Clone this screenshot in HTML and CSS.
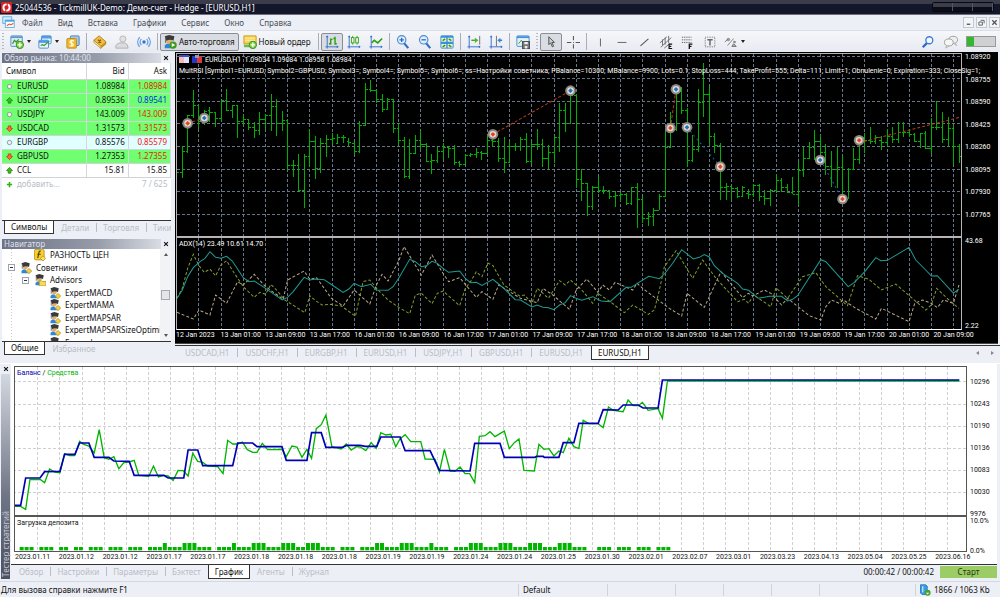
FILE: index.html
```html
<!DOCTYPE html>
<html lang="ru">
  <head>
    <meta charset="utf-8" />
    <title>25044536 - TickmillUK-Demo: Демо-счет - Hedge - [EURUSD,H1]</title>
    <meta name="viewport" content="width=device-width, initial-scale=1" />
    <link rel="stylesheet" href="styles.css">
  </head>
  <body>
    <svg class="defs" width="0" height="0">
      <defs>
        <symbol id="i-plus" viewBox="0 0 8 8"><circle cx="4" cy="4" r="4" fill="#3c9a1c"/><circle cx="4" cy="4" r="3" fill="#7dcb45"/><path d="M4 1.8v4.4M1.8 4h4.4" stroke="#fff" stroke-width="1.3"/></symbol>
        <symbol id="i-newchart" viewBox="0 0 16 16"><rect x="1" y="1" width="13" height="12" rx="1" fill="#dcebfa" stroke="#4c86bd"/><path d="M1 2.500h13" stroke="#5b97d0" stroke-width="2"/><path d="M3 10l2-4 2 2 3-3" stroke="#3a9a28" stroke-width="1.500" fill="none"/><use href="#i-plus" x="6.500" y="6.500" width="9.500" height="9.500"/></symbol>
        <symbol id="i-windows" viewBox="0 0 16 16"><rect x="4" y="1" width="11" height="9" rx="1" fill="#e6f1fc" stroke="#3d86cd"/><path d="M4 2.500h11" stroke="#4f9be6" stroke-width="3"/><rect x="1" y="6" width="11" height="9" rx="1" fill="#eef6fd" stroke="#3d86cd"/><path d="M1 7.500h11" stroke="#4f9be6" stroke-width="3"/><path d="M3 12l2-1 2 1 6-5" stroke="#3a9a28" stroke-width="1.300" fill="none"/></symbol>
        <symbol id="i-dollar" viewBox="0 0 16 16"><rect x="5" y="1" width="10" height="11" rx="1" fill="#a9c9ea" stroke="#3d78b8"/><rect x="1" y="4" width="11" height="11" rx="1" fill="#f3b92c" stroke="#b98a14"/><path d="M9 7q-2.500-1.500-4 0t1.500 2.500 1.500 2.500-4 0M6.500 5.500v8" stroke="#fff7d8" fill="none" stroke-width="1.400"/></symbol>
        <symbol id="i-book" viewBox="0 0 16 16"><path d="M1 6l6-5 8 7-6 5z" fill="#f0c044" stroke="#a87812"/><path d="M1 6l8 7v2.500l-8-7z" fill="#fbe7a2" stroke="#a87812" stroke-width=".7"/><path d="M9 13l6-5v2.500l-6 5z" fill="#c98f18"/><path d="M5.500 5.500l4 3M9 5.500l-3 3" stroke="#8a5c0a" stroke-width="1.500"/></symbol>
        <symbol id="i-cloud" viewBox="0 0 16 16"><circle cx="9" cy="4.500" r="3.500" fill="#e2e2e4" stroke="#b4b4b8"/><path d="M1 15q-1-5 5-6h5q4 1 4 6z" fill="#dcdcdf" stroke="#acacb0"/></symbol>
        <symbol id="i-signal" viewBox="0 0 16 16"><circle cx="8" cy="8" r="2" fill="#2f78d2"/><path d="M5 4.500q-3 3.500 0 7M11 4.500q3 3.500 0 7M3 2.500q-4.500 5.500 0 11M13 2.500q4.500 5.500 0 11" fill="none" stroke="#5b96dd" stroke-width="1.200"/></symbol>
        <symbol id="i-expert" viewBox="0 0 16 16"><path d="M2 15V12q2-3 5-2l4 5z" fill="#2e86d8"/><circle cx="7" cy="7" r="3.200" fill="#e0b070"/><path d="M2 1.500l5-1.500 6 1.500-1 5q-4-2-8 0z" fill="#3a3a3c"/><path d="M3 3v6" stroke="#555"/></symbol>
        <symbol id="i-auto" viewBox="0 0 16 16"><use href="#i-expert" width="16" height="16"/><circle cx="11.500" cy="11.500" r="4.200" fill="#3c9a1c"/><path d="M10 9.200v4.600l4-2.300z" fill="#fff"/></symbol>
        <symbol id="i-ea" viewBox="0 0 16 16"><use href="#i-expert" width="16" height="16"/><path d="M12 8.500l3.500 3.500-3.500 3.500-3.500-3.500z" fill="#f6d23e" stroke="#a98a16"/></symbol>
        <symbol id="i-eafolder" viewBox="0 0 16 16"><use href="#i-expert" width="16" height="16"/><path d="M7 9h3l1 1h5v6H7z" fill="#f8da58" stroke="#b5931b"/></symbol>
        <symbol id="i-fx" viewBox="0 0 16 16"><rect x=".5" y=".5" width="13" height="14" rx="2" fill="#f7cf30" stroke="#a8841a"/><path d="M9 3q-2-1-2.500 2L5 12M4.500 7h4.500" stroke="#503c00" stroke-width="1.500" fill="none"/><path d="M12 9l3.500 3.500L12 16l-3.500-3.500z" fill="#fbe25a" stroke="#a98a16"/></symbol>
        <symbol id="i-order" viewBox="0 0 16 16"><path d="M1 1h14v9H1z" fill="#f8d352" stroke="#c39a22"/><path d="M2 3.500h12M2 6h12" stroke="#fff3bd"/><path d="M1 11h7v3H1z" fill="#74b848"/><use href="#i-plus" x="6.500" y="6.500" width="9.500" height="9.500"/></symbol>
        <symbol id="i-axes" viewBox="0 0 16 16"><path d="M2.500 1v14.500M.5 13.500H15" stroke="#2b66c8" fill="none"/><path d="M1 2.500l1.500-2 1.500 2M13.500 12l2 1.500-2 1.500" fill="#2b66c8"/></symbol>
        <symbol id="i-bars" viewBox="0 0 16 16"><use href="#i-axes" width="16" height="16"/><path d="M6.500 4v7M4.500 10h2M6.500 5h2M11.500 2v9M9.500 4h2M11.500 10h2" stroke="#2f9e12" stroke-width="1.600"/></symbol>
        <symbol id="i-candles" viewBox="0 0 16 16"><use href="#i-axes" width="16" height="16"/><path d="M6.500 1v10M11.500 1v10" stroke="#2f9e12"/><rect x="5" y="3" width="3" height="6" fill="#eef8ea" stroke="#2f9e12"/><rect x="10" y="3" width="3" height="6" fill="#eef8ea" stroke="#2f9e12"/></symbol>
        <symbol id="i-line" viewBox="0 0 16 16"><use href="#i-axes" width="16" height="16"/><path d="M3 9l3-3 4 3 5-5" fill="none" stroke="#2f9e12" stroke-width="1.800"/></symbol>
        <symbol id="i-zoomin" viewBox="0 0 16 16"><path d="M9 9l5 6" stroke="#2d6fc4" stroke-width="2.500"/><circle cx="6.500" cy="5.500" r="4.800" fill="#e0effc" stroke="#4c8ad0" stroke-width="1.300"/><path d="M6.500 3v5M4 5.500h5" stroke="#2d6fc4" stroke-width="1.500"/></symbol>
        <symbol id="i-zoomout" viewBox="0 0 16 16"><path d="M9 9l5 6" stroke="#2d6fc4" stroke-width="2.500"/><circle cx="6.500" cy="5.500" r="4.800" fill="#e0effc" stroke="#4c8ad0" stroke-width="1.300"/><path d="M4 5.500h5" stroke="#2d6fc4" stroke-width="1.500"/></symbol>
        <symbol id="i-tile" viewBox="0 0 16 16"><rect x="1" y="1" width="14" height="14" rx="1" fill="#e4f5dc" stroke="#3f86c9"/><path d="M1 2h14M1 9h14" stroke="#3f8fe0" stroke-width="2.500"/><path d="M8 1v14" stroke="#3f86c9" stroke-width="1.500"/><path d="M3 6.500l3-2M10 4.500l3 2M3 13.500l3-2M10 11.500l3 2" stroke="#2f9e12" stroke-width="1.800"/></symbol>
        <symbol id="i-scroll" viewBox="0 0 16 16"><use href="#i-axes" width="16" height="16"/><path d="M14.500 1v10" stroke="#666"/><path d="M5 6h4" stroke="#2f9e12" stroke-width="1.500"/><path d="M9 3l4 3-4 3z" fill="#4bb52b"/></symbol>
        <symbol id="i-shift" viewBox="0 0 16 16"><use href="#i-axes" width="16" height="16"/><path d="M8.500 1v12" stroke="#666"/><path d="M12 6h3" stroke="#2b66c8" stroke-width="1.500"/><path d="M13 3L9.500 6 13 9z" fill="#3f86d9"/></symbol>
        <symbol id="i-template" viewBox="0 0 16 16"><rect x="1" y="1" width="14" height="12" rx="1" fill="#e4f1fb" stroke="#3f86c9"/><path d="M1 2.500h14" stroke="#3f8fe0" stroke-width="2"/><path d="M3 10l3-4 2 3" stroke="#2f9e12" fill="none"/><rect x="7.500" y="7.500" width="8" height="8" fill="#777" stroke="#444"/><path d="M9.500 8v2.500h4V8M10 15.500v-3h3v3" fill="#eee"/></symbol>
        <symbol id="i-cursor" viewBox="0 0 16 16"><path d="M5.500 2v9l2-2 2 4.500 1.500-.7-2-4.300h3z" fill="#ccc" stroke="#444"/></symbol>
        <symbol id="i-cross" viewBox="0 0 16 16"><path d="M8.500 1v5M8.500 10.500v5M1 8.500h5M11 8.500h5M8 8.500h1" stroke="#555" stroke-width="1.200"/></symbol>
        <symbol id="i-vline" viewBox="0 0 16 16"><path d="M8.500 4v9" stroke="#555"/></symbol>
        <symbol id="i-hline" viewBox="0 0 16 16"><path d="M3 8.500h10" stroke="#555"/></symbol>
        <symbol id="i-diag" viewBox="0 0 16 16"><path d="M4 12.500l9-8" stroke="#555" stroke-width="1.200"/></symbol>
        <symbol id="i-channel" viewBox="0 0 16 16"><path d="M1 9l8-7M2 14L14 3M6 15l6-5M4 5v7M7 3v8M11 1v8" stroke="#666"/><path d="M15 10.500h-3.500v5H15M11.500 13H14" stroke="#111" fill="none" stroke-width="1.300"/></symbol>
        <symbol id="i-fibo" viewBox="0 0 16 16"><path d="M1 2.500h11M1 5.500h11M1 8.500h11" stroke="#555" stroke-dasharray="1.500 1"/><path d="M13 10.500H9.500V16M9.500 13H12" stroke="#111" fill="none" stroke-width="1.500"/></symbol>
        <symbol id="i-text" viewBox="0 0 16 16"><rect x="2.500" y="2.500" width="11" height="11" fill="none" stroke="#666" stroke-dasharray="1 1"/><path d="M5 5.500h6M8 5.500V12" stroke="#666" stroke-width="1.600"/></symbol>
        <symbol id="i-objects" viewBox="0 0 16 16"><path d="M4 12l7-8" stroke="#777"/><circle cx="5" cy="5" r="2" fill="#999"/><path d="M1 8l3-3M9 13l2-3 3 3z" stroke="#666" fill="#bbb"/><circle cx="12" cy="8" r="1.500" fill="#888"/></symbol>
        <symbol id="i-search" viewBox="0 0 16 16"><path d="M7 9l-5 5" stroke="#2b66c8" stroke-width="2.500"/><circle cx="9.500" cy="6" r="4" fill="#f2f8ff" stroke="#3f7bd6" stroke-width="1.500"/></symbol>
        <symbol id="i-chat" viewBox="0 0 16 16"><ellipse cx="10.500" cy="5.500" rx="5" ry="4" fill="#eee" stroke="#999"/><ellipse cx="5.500" cy="8.500" rx="5" ry="4" fill="#f6f6f6" stroke="#999"/><path d="M3 12l-1 3 4-2.500M13 9l1.500 3-4-2.500" fill="#ddd" stroke="#999" stroke-width=".7"/></symbol>
        <symbol id="i-app" viewBox="0 0 16 16"><rect width="16" height="16" rx="2" fill="#d81f26"/><circle cx="8" cy="8" r="4.500" fill="none" stroke="#fff" stroke-width="2.800"/><path d="M9 0v7M7 16V9" stroke="#d81f26" stroke-width="1.500"/></symbol>
        <symbol id="i-mdi" viewBox="0 0 16 16"><rect x="1" y="1" width="11" height="8" fill="#d9ecfc" stroke="#4aa3df"/><rect x="4" y="5" width="11" height="9" fill="#fff" stroke="#4aa3df"/><path d="M4 6h11" stroke="#4aa3df" stroke-width="2"/><path d="M6 12l3-2 2 1 3-2" stroke="#e5512d" stroke-width="1.300" fill="none"/></symbol>
        <symbol id="i-up" viewBox="0 0 8 8"><path d="M4 .5L7.500 4 5.500 4.500V7h-3V4.500L.5 4z" fill="#35c018" stroke="#187c06" stroke-width=".8"/></symbol>
        <symbol id="i-down" viewBox="0 0 8 8"><path d="M4 7.500L7.500 4 5.500 3.500V1h-3V3.500L.5 4z" fill="#ff6a3c" stroke="#c22a0c" stroke-width=".8"/></symbol>
        <symbol id="i-flat" viewBox="0 0 8 8"><circle cx="4" cy="4" r="2.500" fill="#f2f2f2" stroke="#8b8b8b"/></symbol>
        <symbol id="i-traffic" viewBox="0 0 16 16"><path d="M2 1h7l2 2v11H4L2 12z" fill="#35a0e8" stroke="#1f6ead"/><path d="M5 3v8" stroke="#d8efff" stroke-width="1.500"/><circle cx="11.500" cy="11.500" r="4" fill="#4aa02c"/><path d="M11.500 14l-2.200-2.500h4.400z" fill="#fff"/></symbol>
        <symbol id="i-x" viewBox="0 0 8 8"><path d="M1.500 1.500l5 5M6.500 1.500l-5 5" stroke="#111" stroke-width="1.500"/></symbol>
      </defs>
    </svg>

    <header class="titlebar">
      <svg class="app-icon"><use href="#i-app"/></svg>
      <h1>25044536 - TickmillUK-Demo: Демо-счет - Hedge - [EURUSD,H1]</h1>
      <div class="window-buttons"><button aria-label="Свернуть"></button><button aria-label="Развернуть"></button><button aria-label="Закрыть"></button></div>
    </header>

    <nav class="menubar">
      <svg class="mdi-icon"><use href="#i-mdi"/></svg>
      <a href="#">Файл</a><a href="#">Вид</a><a href="#">Вставка</a><a href="#">Графики</a><a href="#">Сервис</a><a href="#">Окно</a><a href="#">Справка</a>
      <div class="mdi-buttons">
        <button aria-label="Свернуть окно"><svg viewBox="0 0 8 8"><path d="M2 6h4" stroke="#555" stroke-width="1.500"/></svg></button>
        <button aria-label="Восстановить окно"><svg viewBox="0 0 8 8"><path d="M3 1.500h4v3.500M1 3.500h4v3.500H1z" stroke="#555" fill="none"/></svg></button>
        <button aria-label="Закрыть окно"><svg viewBox="0 0 8 8"><path d="M1.500 1.500l5 5M6.500 1.500l-5 5" stroke="#555" stroke-width="1.500"/></svg></button>
      </div>
    </nav>

    <div class="toolbar">
      <span class="grip"></span>
      <button class="tool drop" aria-label="Новый график"><svg><use href="#i-newchart"/></svg></button>
      <button class="tool drop" aria-label="Профили"><svg><use href="#i-windows"/></svg></button>
      <button class="tool" aria-label="Обзор рынка"><svg><use href="#i-dollar"/></svg></button>
      <span class="sep"></span>
      <button class="tool" aria-label="Маркет"><svg><use href="#i-book"/></svg></button>
      <button class="tool" aria-label="Облако"><svg><use href="#i-cloud"/></svg></button>
      <button class="tool" aria-label="Сигналы"><svg><use href="#i-signal"/></svg></button>
      <span class="sep"></span>
      <button class="tool wide pressed"><svg><use href="#i-auto"/></svg>Авто-торговля</button>
      <button class="tool wide"><svg><use href="#i-order"/></svg>Новый ордер</button>
      <span class="sep"></span>
      <button class="tool pressed" aria-label="Бары"><svg><use href="#i-bars"/></svg></button>
      <button class="tool" aria-label="Свечи"><svg><use href="#i-candles"/></svg></button>
      <button class="tool" aria-label="Линия"><svg><use href="#i-line"/></svg></button>
      <span class="sep"></span>
      <button class="tool" aria-label="Увеличить"><svg><use href="#i-zoomin"/></svg></button>
      <button class="tool" aria-label="Уменьшить"><svg><use href="#i-zoomout"/></svg></button>
      <button class="tool" aria-label="Мозаика"><svg><use href="#i-tile"/></svg></button>
      <span class="sep"></span>
      <button class="tool" aria-label="Автопрокрутка"><svg><use href="#i-scroll"/></svg></button>
      <button class="tool" aria-label="Сдвиг"><svg><use href="#i-shift"/></svg></button>
      <span class="sep"></span>
      <button class="tool" aria-label="Шаблоны"><svg><use href="#i-template"/></svg></button>
      <span class="grip edge"></span>
      <button class="tool pressed" aria-label="Курсор"><svg><use href="#i-cursor"/></svg></button>
      <button class="tool" aria-label="Перекрестие"><svg><use href="#i-cross"/></svg></button>
      <span class="sep"></span>
      <button class="tool" aria-label="Вертикальная линия"><svg><use href="#i-vline"/></svg></button>
      <button class="tool" aria-label="Горизонтальная линия"><svg><use href="#i-hline"/></svg></button>
      <button class="tool" aria-label="Трендовая линия"><svg><use href="#i-diag"/></svg></button>
      <button class="tool" aria-label="Канал"><svg><use href="#i-channel"/></svg></button>
      <button class="tool" aria-label="Фибоначчи"><svg><use href="#i-fibo"/></svg></button>
      <button class="tool" aria-label="Текст"><svg><use href="#i-text"/></svg></button>
      <button class="tool drop" aria-label="Объекты"><svg><use href="#i-objects"/></svg></button>
      <div class="toolbar-right">
        <button class="tool" aria-label="Поиск"><svg><use href="#i-search"/></svg></button>
        <button class="tool" aria-label="Чат"><svg class="chat"><use href="#i-chat"/></svg></button>
        <span class="level"></span>
      </div>
    </div>

    <main class="workspace">
      <aside class="sidebar">
        <section class="panel watch">
          <h2 class="caption"><span>Обзор рынка: 10:44:00</span><button aria-label="Закрыть"><svg><use href="#i-x"/></svg></button></h2>
          <div class="watch-body">
            <table>
              <thead>
                <tr><th>Символ</th><th>Bid</th><th>Ask</th></tr>
              </thead>
              <tbody>
                <tr class="hit"><td><svg><use href="#i-flat"/></svg>EURUSD</td><td>1.08984</td><td class="red">1.08984</td></tr>
                <tr class="hit"><td><svg><use href="#i-up"/></svg>USDCHF</td><td>0.89536</td><td class="blue">0.89541</td></tr>
                <tr class="hit"><td><svg><use href="#i-flat"/></svg>USDJPY</td><td>143.009</td><td class="red">143.009</td></tr>
                <tr class="hit"><td><svg><use href="#i-down"/></svg>USDCAD</td><td>1.31573</td><td class="red">1.31573</td></tr>
                <tr class="current"><td><svg><use href="#i-flat"/></svg>EURGBP</td><td>0.85576</td><td class="red">0.85579</td></tr>
                <tr class="hit"><td><svg><use href="#i-down"/></svg>GBPUSD</td><td>1.27353</td><td class="red">1.27355</td></tr>
                <tr><td><svg><use href="#i-up"/></svg>CCL</td><td>15.81</td><td>15.85</td></tr>
              </tbody>
              <tfoot>
                <tr><td><svg viewBox="0 0 8 8"><path d="M4 1v6M1 4h6" stroke="#2fb015" stroke-width="1.800"/></svg>добавить...</td><td></td><td>7 / 625</td></tr>
              </tfoot>
            </table>
          </div>
          <div class="tabs">
            <button class="active">Символы</button><button>Детали</button><button>Торговля</button><button>Тики</button>
          </div>
        </section>

        <section class="panel navigator">
          <h2 class="caption"><span>Навигатор</span><button aria-label="Закрыть"><svg><use href="#i-x"/></svg></button></h2>
          <div class="tree-body">
            <ul class="tree">
              <li class="l2"><svg><use href="#i-fx"/></svg>РАЗНОСТЬ ЦЕН</li>
              <li class="l1"><i class="toggle"></i><svg><use href="#i-ea"/></svg>Советники</li>
              <li class="l2"><i class="toggle"></i><svg><use href="#i-eafolder"/></svg>Advisors</li>
              <li class="l3"><svg><use href="#i-ea"/></svg>ExpertMACD</li>
              <li class="l3"><svg><use href="#i-ea"/></svg>ExpertMAMA</li>
              <li class="l3"><svg><use href="#i-ea"/></svg>ExpertMAPSAR</li>
              <li class="l3"><svg><use href="#i-ea"/></svg>ExpertMAPSARSizeOptimi</li>
              <li class="l3"><svg><use href="#i-ea"/></svg>Examples</li>
            </ul>
            <div class="scrollbar"><span class="arrow up"></span><span class="thumb"></span><span class="arrow down"></span></div>
          </div>
          <div class="tabs">
            <button class="active">Общие</button><button>Избранное</button>
          </div>
        </section>
      </aside>

      <section class="charts">
        <div class="chart-window">
          <div class="plot-row">
            <div class="plot price-plot">
              <svg id="price" viewBox="21 12 2355 546" preserveAspectRatio="none"></svg>
              <div class="legend">
                <p><svg viewBox="0 0 10 8"><path d="M0 0h10v8H0z" fill="#dfe3ff"/><path d="M0 0h5v8H0z" fill="#f7b9b4"/><path d="M0 0h10v2H0z" fill="#3b50c8"/></svg><svg viewBox="0 0 10 8"><path d="M0 1h5v7H0z" fill="#2438c8"/><path d="M5 1h5v7H5z" fill="#d83a3a"/><path d="M3 0h4v3H3z" fill="#9a9ab0"/></svg>EURUSD,H1&nbsp; 1.09034 1.09084 1.08958 1.08984</p>
                <p>MultRSI [Symbol1=EURUSD; Symbol2=GBPUSD; Symbol3=; Symbol4=; Symbol5=; Symbol6=; ss=Настройки советника; PBalance=10300; MBalance=9900; Lots=0.1; StopLoss=444; TakeProfit=555; Delta=111; Limit=1; Obnulenie=0; Expiration=333; CloseSig=1;</p>
              </div>
            </div>
            <div class="axis price-axis"><span>1.08920</span><span>1.08755</span><span>1.08590</span><span>1.08425</span><span>1.08260</span><span>1.08095</span><span>1.07930</span><span>1.07765</span></div>
          </div>
          <div class="plot-row">
            <div class="plot adx-plot">
              <svg id="adx" viewBox="21 9 2355 273" preserveAspectRatio="none"></svg>
              <div class="legend"><p>ADX(14) 23.49 10.61 14.70</p></div>
            </div>
            <div class="axis"><span>43.68</span><span>2.22</span></div>
          </div>
          <div class="time-axis" id="price-times"></div>
        </div>
        <div class="tabs chart-tabs">
          <button>USDCAD,H1</button><button>USDCHF,H1</button><button>EURGBP,H1</button><button>EURUSD,H1</button><button>USDJPY,H1</button><button>GBPUSD,H1</button><button>EURUSD,H1</button><button class="active">EURUSD,H1</button>
          <span class="tab-scroll"><i class="arrow left"></i><i class="arrow right"></i></span>
        </div>
      </section>
    </main>

    <section class="tester">
      <div class="tester-side">
        <button aria-label="Закрыть"><svg><use href="#i-x"/></svg></button>
        <h2>Тестер стратегий</h2>
      </div>
      <div class="tester-main">
        <div class="report">
          <div class="plot-row">
            <div class="plot balance-plot">
              <svg id="balance" viewBox="43 18 2857 444" preserveAspectRatio="none"></svg>
              <div class="legend"><p><span class="c-balance">Баланс</span> / <span class="c-equity">Средства</span></p></div>
            </div>
            <div class="axis balance-axis"><span>10296</span><span>10243</span><span>10190</span><span>10136</span><span>10083</span><span>10030</span><span>9976</span></div>
          </div>
          <div class="plot-row">
            <div class="plot load-plot">
              <svg id="load" viewBox="43 471 2857 102" preserveAspectRatio="none"></svg>
              <div class="legend"><p>Загрузка депозита</p></div>
            </div>
            <div class="axis load-axis"><span>10.0%</span><span>0.0%</span></div>
          </div>
          <div class="time-axis" id="test-times"></div>
        </div>
        <div class="tabs tester-tabs">
          <button>Обзор</button><button>Настройки</button><button>Параметры</button><button>Бэктест</button><button class="active">График</button><button>Агенты</button><button>Журнал</button>
          <span class="elapsed">00:00:42 / 00:00:42</span>
          <button class="start">Старт</button>
        </div>
      </div>
    </section>

    <footer class="statusbar">
      <span class="hint">Для вызова справки нажмите F1</span>
      <span class="profile">Default</span>
      <span class="cell bar-time"></span><span class="cell"></span><span class="cell"></span><span class="cell"></span><span class="cell"></span><span class="cell"></span>
      <span class="traffic"><svg><use href="#i-traffic"/></svg>1866 / 1063 Kb</span>
    </footer>
    <script src="script.js"></script>
  </body>
</html>
```
FILE: styles.css
```css
* {
  box-sizing: border-box;
}

body {
  margin: 0;
  min-height: 100vh;
  display: flex;
  flex-direction: column;
  background: #eceff5;
  color: #111;
  font: 8px/12px "Noto Sans", "Open Sans", sans-serif;
}

h1, h2, p, ul {
  margin: 0;
  padding: 0;
  font-weight: normal;
}

button {
  margin: 0;
  padding: 0;
  border: 0;
  background: none;
  color: inherit;
  font: inherit;
}

a {
  color: inherit;
  text-decoration: none;
}

.defs {
  position: absolute;
}

/* title and menu */
.titlebar {
  display: flex;
  align-items: center;
  height: 15px;
  padding: 0 0 0 1px;
  gap: 3px;
  background: linear-gradient(#3c3d4b 0 4px, #14162a 4px 14px, #70707c 14px);
  color: #fff;
}

.titlebar h1 {
  font-size: 8px;
  line-height: 14px;
  white-space: nowrap;
}

.app-icon {
  width: 11px;
  height: 11px;
}

.window-buttons {
  display: flex;
  align-self: flex-start;
  margin: 2px 6px 0 auto;
  border: 1px solid #070812;
  border-radius: 2px;
}

.window-buttons button {
  width: 20px;
  height: 8px;
  border-right: 1px solid #555664;
  background: linear-gradient(#3c3d4b 50%, #0c0d18 50%);
}

.menubar {
  display: flex;
  align-items: center;
  height: 15px;
  padding-left: 2px;
  color: #4a4d55;
}

.menubar a {
  margin-right: 15px;
}

.mdi-icon {
  width: 13px;
  height: 13px;
  margin-right: 7px;
}

.mdi-buttons {
  display: flex;
  gap: 2px;
  margin-left: auto;
}

.mdi-buttons button {
  width: 11px;
  height: 11px;
  border: 1px solid #c4c8d0;
  background: #f4f5f8;
}

.mdi-buttons svg {
  display: block;
  width: 7px;
  height: 7px;
  margin: 1px;
}

/* toolbar */
.toolbar {
  display: flex;
  align-items: center;
  height: 22px;
  padding: 0 0 0 2px;
  border-top: 1px solid #dcdfe6;
  background: linear-gradient(#f5f7fa, #e7eaf1);
}

.tool {
  display: flex;
  align-items: center;
  justify-content: center;
  flex: none;
  width: 22px;
  height: 18px;
  border: 1px solid transparent;
}

.tool svg {
  width: 14px;
  height: 14px;
}

.tool svg.chat {
  width: 16px;
}

.tool.drop {
  width: 28px;
  gap: 3px;
}

.tool.drop::after {
  content: "";
  border: 2px solid transparent;
  border-top: 3px solid #222;
  border-bottom: 0;
}

.tool.wide {
  width: auto;
  padding: 0 3px 0 2px;
  gap: 2px;
  margin-right: 1px;
}

.tool.pressed {
  border: 1px solid #8a8d95;
  border-radius: 2px;
  background: #d9dce2;
}

.sep {
  width: 1px;
  height: 17px;
  margin: 0 2px;
  background: #a9adb5;
}

.grip {
  width: 2px;
  height: 18px;
  margin-right: 2px;
  background: repeating-linear-gradient(#b4b8c0 0 1px, transparent 1px 3px);
}

.grip.edge {
  margin: 0 2px;
}

.toolbar-right {
  display: flex;
  align-items: center;
  gap: 1px;
  margin: 0 4px 0 auto;
}

.level {
  width: 30px;
  height: 11px;
  margin-left: 3px;
  border: 1px solid #999;
  background: linear-gradient(90deg, #32b82e 7px, #cfd0d2 7px);
}

/* shared panels and tabs */
.workspace {
  display: grid;
  grid-template-columns: 175px minmax(0, 1fr);
}

.sidebar {
  display: flex;
  flex-direction: column;
  padding: 1px 4px 0 2px;
}

.panel {
  display: flex;
  flex-direction: column;
}

.caption {
  display: flex;
  justify-content: space-between;
  height: 10px;
  font-size: 8px;
  line-height: 10px;
  color: #dfe3ec;
}

.caption span {
  flex: 1;
  padding-left: 2px;
  background: linear-gradient(90deg, #6d7286, #979caa 60%, #d9dce3);
}

.caption button,
.tester-side button {
  width: 10px;
  height: 10px;
  line-height: 0;
}

.caption svg,
.tester-side svg {
  width: 6px;
  height: 6px;
}

.tabs {
  display: flex;
  height: 14px;
  padding-left: 2px;
  overflow: hidden;
  border-top: 1px solid #333;
  white-space: nowrap;
  color: #b9bdc6;
}

.tabs button {
  position: relative;
  flex: none;
  padding: 0 7px;
}

.tabs button:not(.active):not(.start) + button:not(.active):not(.start)::before {
  content: "";
  position: absolute;
  left: 0;
  top: 2px;
  height: 9px;
  border-left: 1px solid #b9bdc6;
}

.tabs .active {
  margin-top: -1px;
  padding: 0 6px;
  border: 1px solid #333;
  border-top-color: #fff;
  background: #fff;
  color: #111;
}

/* market watch */
.watch-body {
  height: 157px;
  background: #fff;
}

.watch table {
  width: 100%;
  table-layout: fixed;
  border-collapse: collapse;
}

.watch th,
.watch td {
  height: 14px;
  padding: 0 3px;
  border-right: 1px solid #d4d7dd;
  border-bottom: 1px solid #d0d3d8;
  line-height: 12px;
  text-align: right;
}

.watch th {
  height: 16px;
  font-weight: normal;
}

.watch th:first-child {
  width: 84px;
}

.watch th:first-child,
.watch td:first-child {
  padding-left: 4px;
  text-align: left;
}

.watch td svg {
  width: 7px;
  height: 7px;
  margin-right: 4px;
  vertical-align: -1px;
}

.watch .hit {
  background: #70ff70;
}

.watch .current {
  background: #e0ffff;
}

.watch tfoot td {
  border: 0;
  color: #b9bdc6;
}

.red {
  color: #e02800;
}

.current .red {
  color: #ff1020;
}

.blue {
  color: #0030e0;
}

/* navigator */
.navigator {
  margin-top: 5px;
}

.tree-body {
  display: flex;
  height: 92px;
  overflow: hidden;
  background: #fff;
}

.tree {
  display: grid;
  grid-template-rows: repeat(8, 1fr);
  flex: 1;
  height: 100px;
  overflow: hidden;
  list-style: none;
  background: repeating-linear-gradient(#ccc 0 1px, transparent 1px 3px) 9px 0 / 1px 100% no-repeat;
}

.tree li {
  display: flex;
  align-items: center;
  white-space: nowrap;
}

.tree svg {
  flex: none;
  width: 12px;
  height: 12px;
  margin-right: 4px;
}

.tree .l1 { padding-left: 6px; }
.tree .l2 { padding-left: 32px; }
.tree .l3 { padding-left: 47px; }

.toggle {
  width: 7px;
  height: 7px;
  margin-right: 5px;
  border: 1px solid #9aa2b4;
  background: linear-gradient(#333, #333) center / 3px 1px no-repeat #fff;
}

.l2 .toggle {
  margin-left: -12px;
}

.scrollbar {
  display: flex;
  flex-direction: column;
  align-items: center;
  width: 11px;
  padding: 4px 0;
  background: #f2f3f5;
}

.thumb {
  width: 9px;
  height: 10px;
  margin: 34px 0 auto;
  border: 1px solid #a4a8b0;
  background: #e4e5e8;
}

.arrow {
  border: 2px solid transparent;
}

.arrow.up { border-bottom: 3px solid #555; border-top: 0; }
.arrow.down { border-top: 3px solid #555; border-bottom: 0; }
.arrow.left { border-right: 3px solid #888; border-left: 0; }
.arrow.right { border-left: 3px solid #888; border-right: 0; }

/* charts */
.chart-window {
  margin-right: 2px;
  padding: 1px 0 0 1px;
  border-bottom: 1px solid #444;
  background: #000;
  color: #fff;
}

.plot-row {
  display: grid;
  grid-template-columns: minmax(0, 1fr) 36px;
}

.plot {
  position: relative;
  border: 1px solid #b8b4b4;
}

.plot > svg {
  display: block;
  width: 100%;
}

.price-plot > svg { height: 182px; }

.adx-plot {
  border-bottom-color: #fff;
}

.adx-plot > svg { height: 91px; }

.legend {
  position: absolute;
  top: 1px;
  left: 2px;
  font-size: 7px;
  line-height: 11px;
  white-space: nowrap;
}

.legend,
.axis,
.time-axis {
  font-family: Roboto, sans-serif;
}

.legend svg {
  width: 10px;
  height: 8px;
  margin-right: 3px;
  vertical-align: -1px;
}

.axis {
  display: flex;
  flex-direction: column;
  justify-content: space-between;
  font-size: 7px;
  line-height: 8px;
}

.axis span {
  padding-left: 3px;
}

.price-axis {
  padding-bottom: 18px;
}

.time-axis {
  display: grid;
  grid-auto-flow: column;
  grid-auto-columns: minmax(0, 1fr);
  height: 13px;
  padding-right: 20px;
  font-size: 7px;
  line-height: 11px;
  white-space: nowrap;
}

.chart-tabs {
  height: 15px;
  margin-top: 1px;
}

.chart-tabs button {
  padding: 0 8px;
}

.tab-scroll {
  display: flex;
  align-items: center;
  gap: 12px;
  margin: 0 6px 0 auto;
}

/* strategy tester */
.tester {
  display: grid;
  grid-template-columns: 11px minmax(0, 1fr);
  margin-top: 3px;
  border-top: 1px solid #fff;
}

.tester-side {
  display: flex;
  flex-direction: column;
  padding-left: 1px;
}

.tester-side h2 {
  flex: 1;
  width: 9px;
  padding-top: 2px;
  background: linear-gradient(#4d5262, #6f7485 40%, #d3d7e0);
  color: #c3c7d2;
  font-size: 8px;
  line-height: 9px;
  white-space: nowrap;
  writing-mode: vertical-rl;
  transform: rotate(180deg);
}

.tester-main {
  margin-right: 3px;
}

.report {
  padding: 2px 0 0 3px;
  background: #fff;
}

.report .plot-row {
  grid-template-columns: minmax(0, 1fr) 30px;
}

.report .plot {
  border-color: #555;
}

.balance-plot > svg { height: 148px; }
.load-plot > svg { height: 34px; }

.balance-axis {
  padding-top: 12px;
  margin-bottom: -2px;
}

.load-axis {
  padding-top: 1px;
  margin-bottom: -3px;
}

.report .time-axis {
  height: 12px;
  padding: 0 18px 0 1px;
}

.c-balance { color: #0000b4; }
.c-equity { color: #00b400; }

.tester-tabs {
  height: 15px;
  padding-left: 1px;
}

.elapsed {
  margin: 0 6px 0 auto;
  color: #111;
  line-height: 14px;
}

.tabs .start {
  width: 57px;
  height: 12px;
  margin-top: 1px;
  background: #9ccc65;
  color: #1c3a08;
}

/* status bar */
.statusbar {
  display: flex;
  align-items: center;
  flex: 1;
  min-height: 17px;
  margin-top: 2px;
  border-top: 1px solid #d4d8df;
}

.statusbar > span {
  border-right: 1px solid #cfd3da;
}

.statusbar .hint {
  flex: 1;
  padding-left: 1px;
}

.profile {
  width: 89px;
  padding-left: 4px;
}

.cell {
  width: 48px;
  height: 12px;
}

.bar-time {
  width: 68px;
}

.statusbar .traffic {
  display: flex;
  align-items: center;
  gap: 3px;
  width: 84px;
  padding-left: 3px;
  border: 0;
}

.traffic svg {
  width: 12px;
  height: 12px;
}

/* drawing */
.grid-dark { stroke: #66758a; stroke-width: 1px; stroke-dasharray: 3px 2px; }
.grid-light { stroke: #d0d0d0; stroke-width: 1px; stroke-dasharray: 3px 2px; }
.bar { stroke: #00b000; stroke-width: 1px; fill: none; }
.adx, .plus-di, .minus-di { fill: none; stroke-width: 1px; }
.adx { stroke: #1f9c95; }
.plus-di { stroke: #7d9e2c; stroke-dasharray: 3px 2px; }
.minus-di { stroke: #b8a88a; stroke-dasharray: 3px 2px; }
.deal-red { stroke: #b83a1c; stroke-width: 1px; stroke-dasharray: 3px 2px; }
.deal-blue { stroke: #145c98; stroke-width: 1px; stroke-dasharray: 2px 3px; }
.balance, .equity { fill: none; }
.balance { stroke: #0000b4; stroke-width: 5; }
.equity { stroke: #00b400; stroke-width: 4; }
.load { fill: #00b400; }
.grid-dark, .grid-light, .bar, .adx, .plus-di, .minus-di, .deal-red, .deal-blue { vector-effect: non-scaling-stroke; }
.grid-dark, .grid-light, .bar { shape-rendering: crispEdges; }
```
FILE: script.js
```js
// high, low, open, close of each bar
const bars = [
  [367,367,367,367],[289,383,367,303],[195,308,303,196],[120,205,196,166],[165,236,166,214],[180,225,214,185],[172,215,180,187],[187,232,187,205],
  [150,212,205,151],[117,183,151,181],[165,205,181,167],[166,265,167,213],[195,225,213,208],[207,240,208,232],[217,265,232,241],[187,256,241,207],
  [193,236,207,195],[131,242,195,169],[148,259,169,220],[183,242,220,211],[210,360,211,346],[330,382,346,346],[313,424,346,422],[313,475,422,320],
  [237,350,320,275],[259,388,275,355],[265,370,355,280],[254,320,280,267],[250,283,267,266],[251,278,280,262],[255,278,262,262],[265,292,274,277],
  [275,315,280,303],[214,308,303,227],[100,229,227,118],[91,127,118,121],[120,160,121,149],[131,187,149,178],[145,180,178,148],[147,248,148,235],
  [222,286,235,270],[262,383,270,380],[267,388,380,309],[256,311,309,270],[243,300,270,283],[280,337,283,333],[313,372,333,331],[290,340,331,303],
  [278,327,303,293],[288,325,293,295],[285,345,295,337],[334,350,337,343],[313,343,343,316],[308,320,316,313],[295,325,313,308],[302,330,308,310],
  [260,313,310,272],[262,290,272,275],[263,337,275,325],[262,369,325,337],[275,340,337,290],[280,303,290,290],[262,303,290,268],[250,340,268,335],
  [277,342,335,283],[238,300,283,283],[267,350,283,325],[285,358,325,308],[258,339,308,263],[160,305,263,180],[160,246,180,220],[130,220,220,137],
  [133,415,137,388],[358,452,388,400],[400,498,400,470],[408,480,470,413],[380,430,413,420],[408,432,420,421],[420,448,421,438],[422,472,438,437],
  [425,453,437,433],[430,466,433,460],[410,464,460,412],[398,534,412,448],[440,520,448,505],[485,528,505,500],[475,528,500,480],[433,480,480,438],
  [247,440,438,291],[187,290,291,238],[120,242,238,125],[110,192,125,180],[175,352,180,330],[255,335,330,298],[117,305,298,157],[38,200,157,133],
  [112,285,133,258],[250,308,258,287],[280,450,287,412],[398,450,412,410],[408,450,410,416],[410,445,416,438],[407,440,438,412],[418,448,430,433],
  [403,440,433,405],[402,452,405,440],[420,465,440,445],[418,467,445,422],[373,428,422,390],[385,427,390,412],[403,430,412,427],[382,433,427,433],
  [335,465,433,361],[291,380,361,325],[275,328,325,291],[240,330,291,275],[256,312,275,308],[283,376,308,350],[303,412,350,357],[292,414,357,352],
  [315,450,352,440],[355,447,447,357],[293,360,357,327],[255,343,327,262],[250,310,262,272],[232,282,272,275],[255,283,275,262],[257,300,270,278],
  [238,288,278,258],[230,278,258,268],[215,278,268,247],[215,262,247,247],[240,262,247,253],[250,275,253,275],[248,293,275,250],[243,297,250,295],
  [205,313,295,232],[154,240,232,232],[185,278,232,267],[202,290,267,235],[225,345,235,290],[282,338,290,318],
];

const deals = [
  [53,220,"red"],[103,204,"blue"],[970,253,"red"],[1203,122,"blue"],[1503,234,"red"],[1520,118,"blue"],
  [1553,232,"blue"],[1653,350,"red"],[1953,330,"blue"],[2020,447,"red"],[2070,271,"red"],
];

const dealLines = [
  [53,220,103,204,"red"],[970,253,1203,122,"red"],[1503,234,1520,118,"red"],
  [1553,232,1653,350,"blue"],[1953,330,2020,447,"blue"],[2070,278,2376,201,"red"],
];

const adx = "21,190 37,165 53,125 70,98 90,80 105,70 120,50 137,67 153,70 170,64 187,78 203,102 220,128 237,140 253,138 287,160 337,195 353,187 370,170 403,127 420,135 437,132 463,134 487,150 520,172 537,162 553,145 575,155 603,148 620,165 655,166 670,155 687,130 720,73 737,80 755,95 770,92 787,79 803,85 820,100 837,112 870,108 887,130 903,143 920,142 937,151 970,133 987,147 1003,160 1037,194 1053,195 1087,216 1103,210 1120,217 1137,218 1153,224 1170,210 1187,203 1203,182 1220,190 1237,196 1270,185 1295,198 1322,200 1370,157 1385,157 1438,124 1470,131 1485,117 1510,85 1537,44 1572,72 1590,67 1605,59 1620,66 1635,92 1660,115 1705,145 1720,162 1738,166 1767,190 1800,184 1837,184 1855,198 1870,193 1885,182 1955,74 1970,80 2037,155 2055,143 2087,110 2120,68 2135,77 2155,76 2220,37 2240,75 2270,105 2287,123 2305,122 2353,174 2370,163";
const plusDi = "21,190 37,160 53,100 70,58 87,92 103,112 120,102 137,123 153,90 170,77 187,105 220,155 253,187 270,172 287,178 303,148 320,165 345,195 405,233 420,182 437,197 457,210 485,208 515,213 557,244 580,140 600,135 625,165 655,195 687,217 720,236 737,180 755,175 787,206 803,175 820,168 870,212 887,160 903,140 920,110 937,125 955,84 970,92 1003,150 1050,183 1065,180 1087,205 1103,160 1137,190 1170,137 1187,150 1203,135 1237,165 1270,205 1285,175 1322,200 1365,233 1390,210 1437,238 1455,225 1470,165 1485,95 1520,47 1570,130 1600,75 1640,130 1705,200 1725,193 1738,205 1753,180 1805,215 1820,158 1855,190 1900,125 1940,113 1970,155 2035,212 2065,122 2100,133 2137,165 2180,147 2270,225 2287,210 2303,160 2345,200 2370,220";
const minusDi = "21,232 70,252 87,225 120,240 137,180 170,205 203,140 220,150 253,118 287,155 340,193 353,135 403,108 420,133 440,128 485,190 520,213 553,165 600,207 620,150 637,118 655,138 687,78 703,35 755,120 787,60 820,115 837,140 870,128 920,187 937,170 970,193 987,150 1020,170 1053,190 1103,203 1120,160 1150,180 1200,223 1220,165 1252,132 1285,172 1300,150 1320,165 1337,142 1390,165 1403,145 1420,160 1500,220 1537,243 1553,175 1605,217 1655,110 1720,188 1737,175 1750,183 1785,165 1805,175 1837,210 1855,190 1920,242 1955,255 1970,215 1987,195 2010,205 2023,195 2060,220 2120,252 2137,220 2220,260 2237,205 2260,195 2287,205 2305,218 2323,195 2353,205 2370,150";

const balance = "43,433 60,433 75,351 118,351 132,332 178,331 192,280 223,280 237,246 265,246 281,289 325,289 340,300 386,301 401,343 490,343 503,351 550,351 563,267 592,267 607,314 697,314 712,246 757,246 770,257 845,257 858,298 920,298 934,215 963,215 977,259 1027,259 1040,253 1080,253 1095,256 1130,256 1142,228 1200,228 1215,269 1290,269 1318,328 1410,330 1424,247 1500,247 1513,289 1605,289 1610,286 1630,286 1633,289 1677,289 1690,245 1722,245 1737,187 1795,187 1810,146 1855,147 1870,132 1915,132 1930,141 1975,141 1988,57 2880,57";
const equity = "43,436 60,436 75,445 88,355 120,356 132,365 147,324 162,333 178,335 192,278 207,284 222,284 237,241 250,250 265,255 281,276 296,206 311,290 325,295 340,287 355,323 370,305 386,303 401,298 415,343 445,346 459,315 474,348 490,343 503,345 518,358 533,328 548,329 563,345 577,277 592,301 607,304 622,315 652,317 668,338 682,238 697,249 712,249 726,243 741,266 757,274 770,274 786,247 802,266 845,265 858,287 875,255 890,258 905,289 920,265 934,292 948,203 963,191 977,162 995,257 1023,264 1038,249 1053,267 1068,257 1080,258 1097,269 1113,245 1128,262 1142,215 1157,222 1172,220 1187,257 1200,233 1215,221 1232,242 1262,242 1275,294 1305,295 1318,333 1333,265 1350,330 1365,331 1380,318 1395,338 1409,338 1424,365 1438,226 1455,224 1470,212 1485,227 1500,218 1513,210 1528,263 1543,245 1557,234 1572,328 1603,330 1617,250 1632,265 1647,263 1662,285 1677,270 1690,275 1707,232 1722,257 1737,263 1750,178 1767,188 1795,188 1810,200 1826,138 1840,148 1870,152 1885,117 1900,134 1915,134 1928,124 1945,148 1975,143 1988,172 2003,60 2880,60";

// L = half load, H = full load, dot = no position
const load = "LLL.LLL.LL.LL.LLL.LLL.LLL.LLLHLLLHHHLLL.LLLHLLLHHHLLLHHHLLHHHLLL.LLL.LLLHHLLLHHHLLLHLLL.LLLHHHLLLHHHLLLHHHLLLHHHLLL..LLL.LLL.LLL.LLL";

const priceTimes = ["12 Jan 2023", "13 Jan 01:00", "13 Jan 09:00", "13 Jan 17:00", "16 Jan 01:00", "16 Jan 09:00", "16 Jan 17:00", "17 Jan 01:00", "17 Jan 09:00", "17 Jan 17:00", "18 Jan 01:00", "18 Jan 09:00", "18 Jan 17:00", "19 Jan 01:00", "19 Jan 09:00", "19 Jan 17:00", "20 Jan 01:00", "20 Jan 09:00"];
const testTimes = ["2023.01.11", "2023.01.12", "2023.01.12", "2023.01.17", "2023.01.17", "2023.01.18", "2023.01.18", "2023.01.18", "2023.01.19", "2023.01.19", "2023.01.24", "2023.01.24", "2023.01.25", "2023.01.30", "2023.02.01", "2023.02.07", "2023.03.01", "2023.03.23", "2023.04.13", "2023.05.04", "2023.05.25", "2023.06.16"];

const grid = (cls, x0, stepX, x1, top, bottom, rows = []) => {
  let d = "";
  for (let x = x0; x < x1; x += stepX) d += `M${x} ${top}V${bottom}`;
  for (const y of rows) d += `M21 ${y}H${x1}`;
  return `<path class="${cls}" d="${d}"/>`;
};

const poly = (cls, points) => `<polyline class="${cls}" points="${points}"/>`;

const barPath = bars
  .map(([h, l, o, c], i) => {
    const x = 20 + i * 16.67;
    return `M${x} ${h}V${l}M${x - 6} ${o}h6M${x} ${c}h8`;
  })
  .join("");

const marker = ([x, y, color]) => {
  const fill = color === "red" ? "#e8421c" : "#1c70bc";
  return `<circle cx="${x}" cy="${y}" r="16" fill="#8d8782"/><circle cx="${x}" cy="${y}" r="10" fill="#e2dad4"/>
    <path d="M${x} ${y - 7}l7 7-7 7-7-7z" fill="${fill}"/>`;
};

document.querySelector("#price").innerHTML =
  grid("grid-dark", 86.5, 66.7, 2376, 12, 558, [19, 86, 154, 221, 289, 357, 424, 492]) +
  `<path class="bar" d="${barPath}"/>` +
  dealLines.map(([x1, y1, x2, y2, c]) => `<line class="deal-${c}" x1="${x1}" y1="${y1}" x2="${x2}" y2="${y2}"/>`).join("") +
  deals.map(marker).join("");

document.querySelector("#adx").innerHTML =
  grid("grid-dark", 86.5, 66.7, 2376, 9, 282) + poly("plus-di", plusDi) + poly("minus-di", minusDi) + poly("adx", adx);

document.querySelector("#balance").innerHTML =
  grid("grid-light", 111, 66.7, 2900, 18, 462, [61, 129, 195, 262, 328, 394]) + poly("equity", equity) + poly("balance", balance);

document.querySelector("#load").innerHTML =
  grid("grid-light", 111, 66.7, 2900, 471, 573) +
  [...load]
    .map((v, i) => (v === "." ? "" : `<rect class="load" x="${57 + i * 14.83}" y="${v === "H" ? 549 : 561}" width="12" height="${v === "H" ? 22 : 10}"/>`))
    .join("");

const labels = (list) => list.map((t) => `<span>${t}</span>`).join("");
document.querySelector("#price-times").innerHTML = labels(priceTimes);
document.querySelector("#test-times").innerHTML = labels(testTimes);
```
